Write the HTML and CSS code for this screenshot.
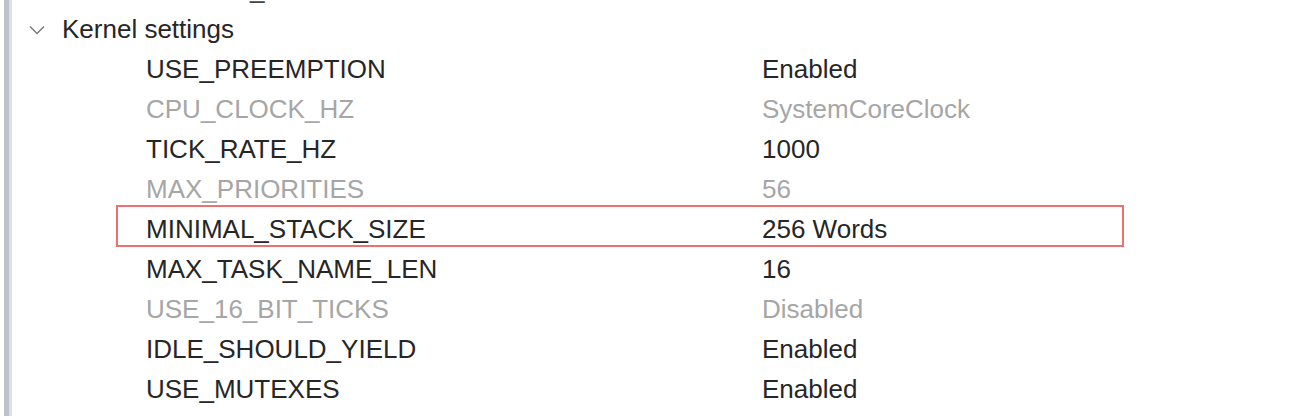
FILE: index.html
```html
<!DOCTYPE html>
<html>
<head>
<meta charset="utf-8">
<link rel="stylesheet" href="styles.css">
</head>
<body>
<div class="panel">
  <div class="row prev"><span class="prev-text">_</span></div>
  <div class="row group">
    <svg class="chev" width="16" height="10" viewBox="0 0 16 10"><path d="M1 1.5 L8 8.5 L15 1.5" fill="none" stroke="#7a7a7a" stroke-width="1.5"/></svg>
    <span class="group-label">Kernel settings</span>
  </div>
  <div class="row item"><span class="name">USE_PREEMPTION</span><span class="value">Enabled</span></div>
  <div class="row item disabled"><span class="name">CPU_CLOCK_HZ</span><span class="value">SystemCoreClock</span></div>
  <div class="row item"><span class="name">TICK_RATE_HZ</span><span class="value">1000</span></div>
  <div class="row item disabled"><span class="name">MAX_PRIORITIES</span><span class="value">56</span></div>
  <div class="row item selected"><span class="name">MINIMAL_STACK_SIZE</span><span class="value">256 Words</span></div>
  <div class="row item"><span class="name">MAX_TASK_NAME_LEN</span><span class="value">16</span></div>
  <div class="row item disabled"><span class="name">USE_16_BIT_TICKS</span><span class="value">Disabled</span></div>
  <div class="row item"><span class="name">IDLE_SHOULD_YIELD</span><span class="value">Enabled</span></div>
  <div class="row item"><span class="name">USE_MUTEXES</span><span class="value">Enabled</span></div>
</div>
</body>
</html>
```
FILE: styles.css
```css
html, body {
  margin: 0;
  padding: 0;
  background: #ffffff;
  overflow: hidden;
}
body {
  font-family: "Liberation Sans", Arial, sans-serif;
  font-size: 26px;
  color: #262626;
  height: 416px;
}
.panel {
  margin-left: 4px;
  border-left: 5px solid #bcc2c9;
  box-shadow: inset 3px 0 0 #dde1e5;
  height: 416px;
  display: flex;
  flex-direction: column;
}
.row {
  height: 40px;
  flex: 0 0 40px;
  display: flex;
  align-items: center;
  white-space: nowrap;
}
.prev {
  margin-top: -31px;
  padding-left: 241px;
  color: #444;
}
.group {
  padding-left: 20px;
}
.chev {
  display: block;
  margin-right: 17px;
  margin-top: 1px;
}
.item {
  padding-left: 137px;
  position: relative;
}
.name {
  width: 616px;
}
.disabled {
  color: #a6a6a6;
}
.selected::after {
  content: "";
  position: absolute;
  left: 107px;
  width: 1008px;
  top: -4px;
  height: 42px;
  box-sizing: border-box;
  border: 2px solid #ee7070;
}
```
